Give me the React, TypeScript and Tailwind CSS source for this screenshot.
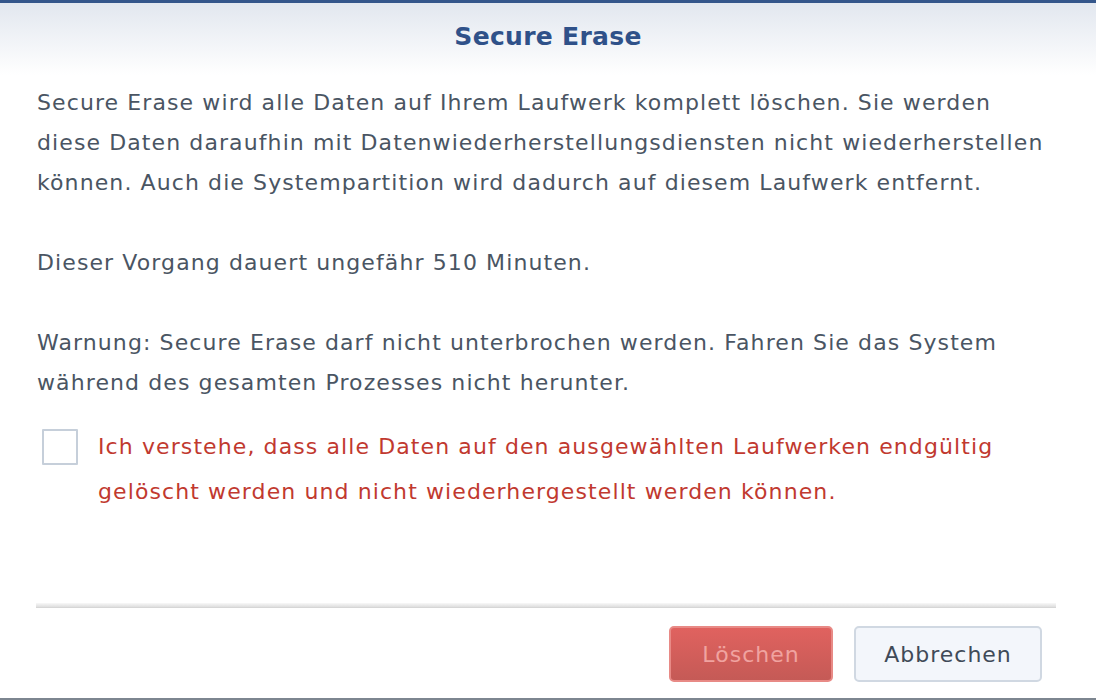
import React from "react";

export default function App() {
  const body = { fontFamily: '"DejaVu Sans", Verdana, sans-serif' };
  return (
    <div className="w-[1096px] h-[700px] bg-white flex flex-col overflow-hidden" style={body}>
      <div className="h-[3px] bg-[#34568b]" />
      <div className="h-[72px] bg-gradient-to-b from-[#e2e7ef] to-white flex items-center justify-center">
        <h1 className="text-[25px] font-bold text-[#2f5189] -mt-[5px] tracking-[0.3px]">Secure Erase</h1>
      </div>
      <div className="flex-1 pl-[37px] pr-[50px] pt-[8px] text-[22px] tracking-[1.1px] leading-[40px] text-[#4a5563]">
        <p>
          Secure Erase wird alle Daten auf Ihrem Laufwerk komplett löschen. Sie werden diese Daten daraufhin mit
          Datenwiederherstellungsdiensten nicht wiederherstellen können. Auch die Systempartition wird dadurch auf
          diesem Laufwerk entfernt.
        </p>
        <p className="mt-[40px]">Dieser Vorgang dauert ungefähr 510 Minuten.</p>
        <p className="mt-[40px]">
          Warnung: Secure Erase darf nicht unterbrochen werden. Fahren Sie das System während des gesamten Prozesses
          nicht herunter.
        </p>
        <div className="flex items-start mt-[23px]">
          <div className="w-[36px] h-[36px] border-2 border-[#c6cfda] bg-white rounded-[1px] ml-[5px] mt-[3px] shrink-0" />
          <p className="ml-[20px] text-[#c1392f] leading-[45px] -mt-[2px]">
            Ich verstehe, dass alle Daten auf den ausgewählten Laufwerken endgültig gelöscht werden und nicht
            wiederhergestellt werden können.
          </p>
        </div>
      </div>
      <div className="ml-[36px] mr-[40px] h-[5px] bg-gradient-to-b from-[#f8f8f8] to-[#dedede] border-b border-[#d6d6d6]" />
      <div className="h-[90px] flex items-start justify-end pr-[54px] pt-[18px] gap-[21px]">
        <button className="w-[164px] h-[56px] rounded-[5px] border-2 border-[#e88a86] bg-gradient-to-b from-[#e0625f] to-[#c55a56] text-[22px] tracking-[1px] text-[#f0a3a0]">
          Löschen
        </button>
        <button className="w-[188px] h-[56px] rounded-[5px] border-2 border-[#d0d8e2] bg-[#f3f6fb] text-[22px] tracking-[1px] text-[#3f4a58]">
          Abbrechen
        </button>
      </div>
      <div className="h-[2px] bg-[#7d8690]" />
    </div>
  );
}
